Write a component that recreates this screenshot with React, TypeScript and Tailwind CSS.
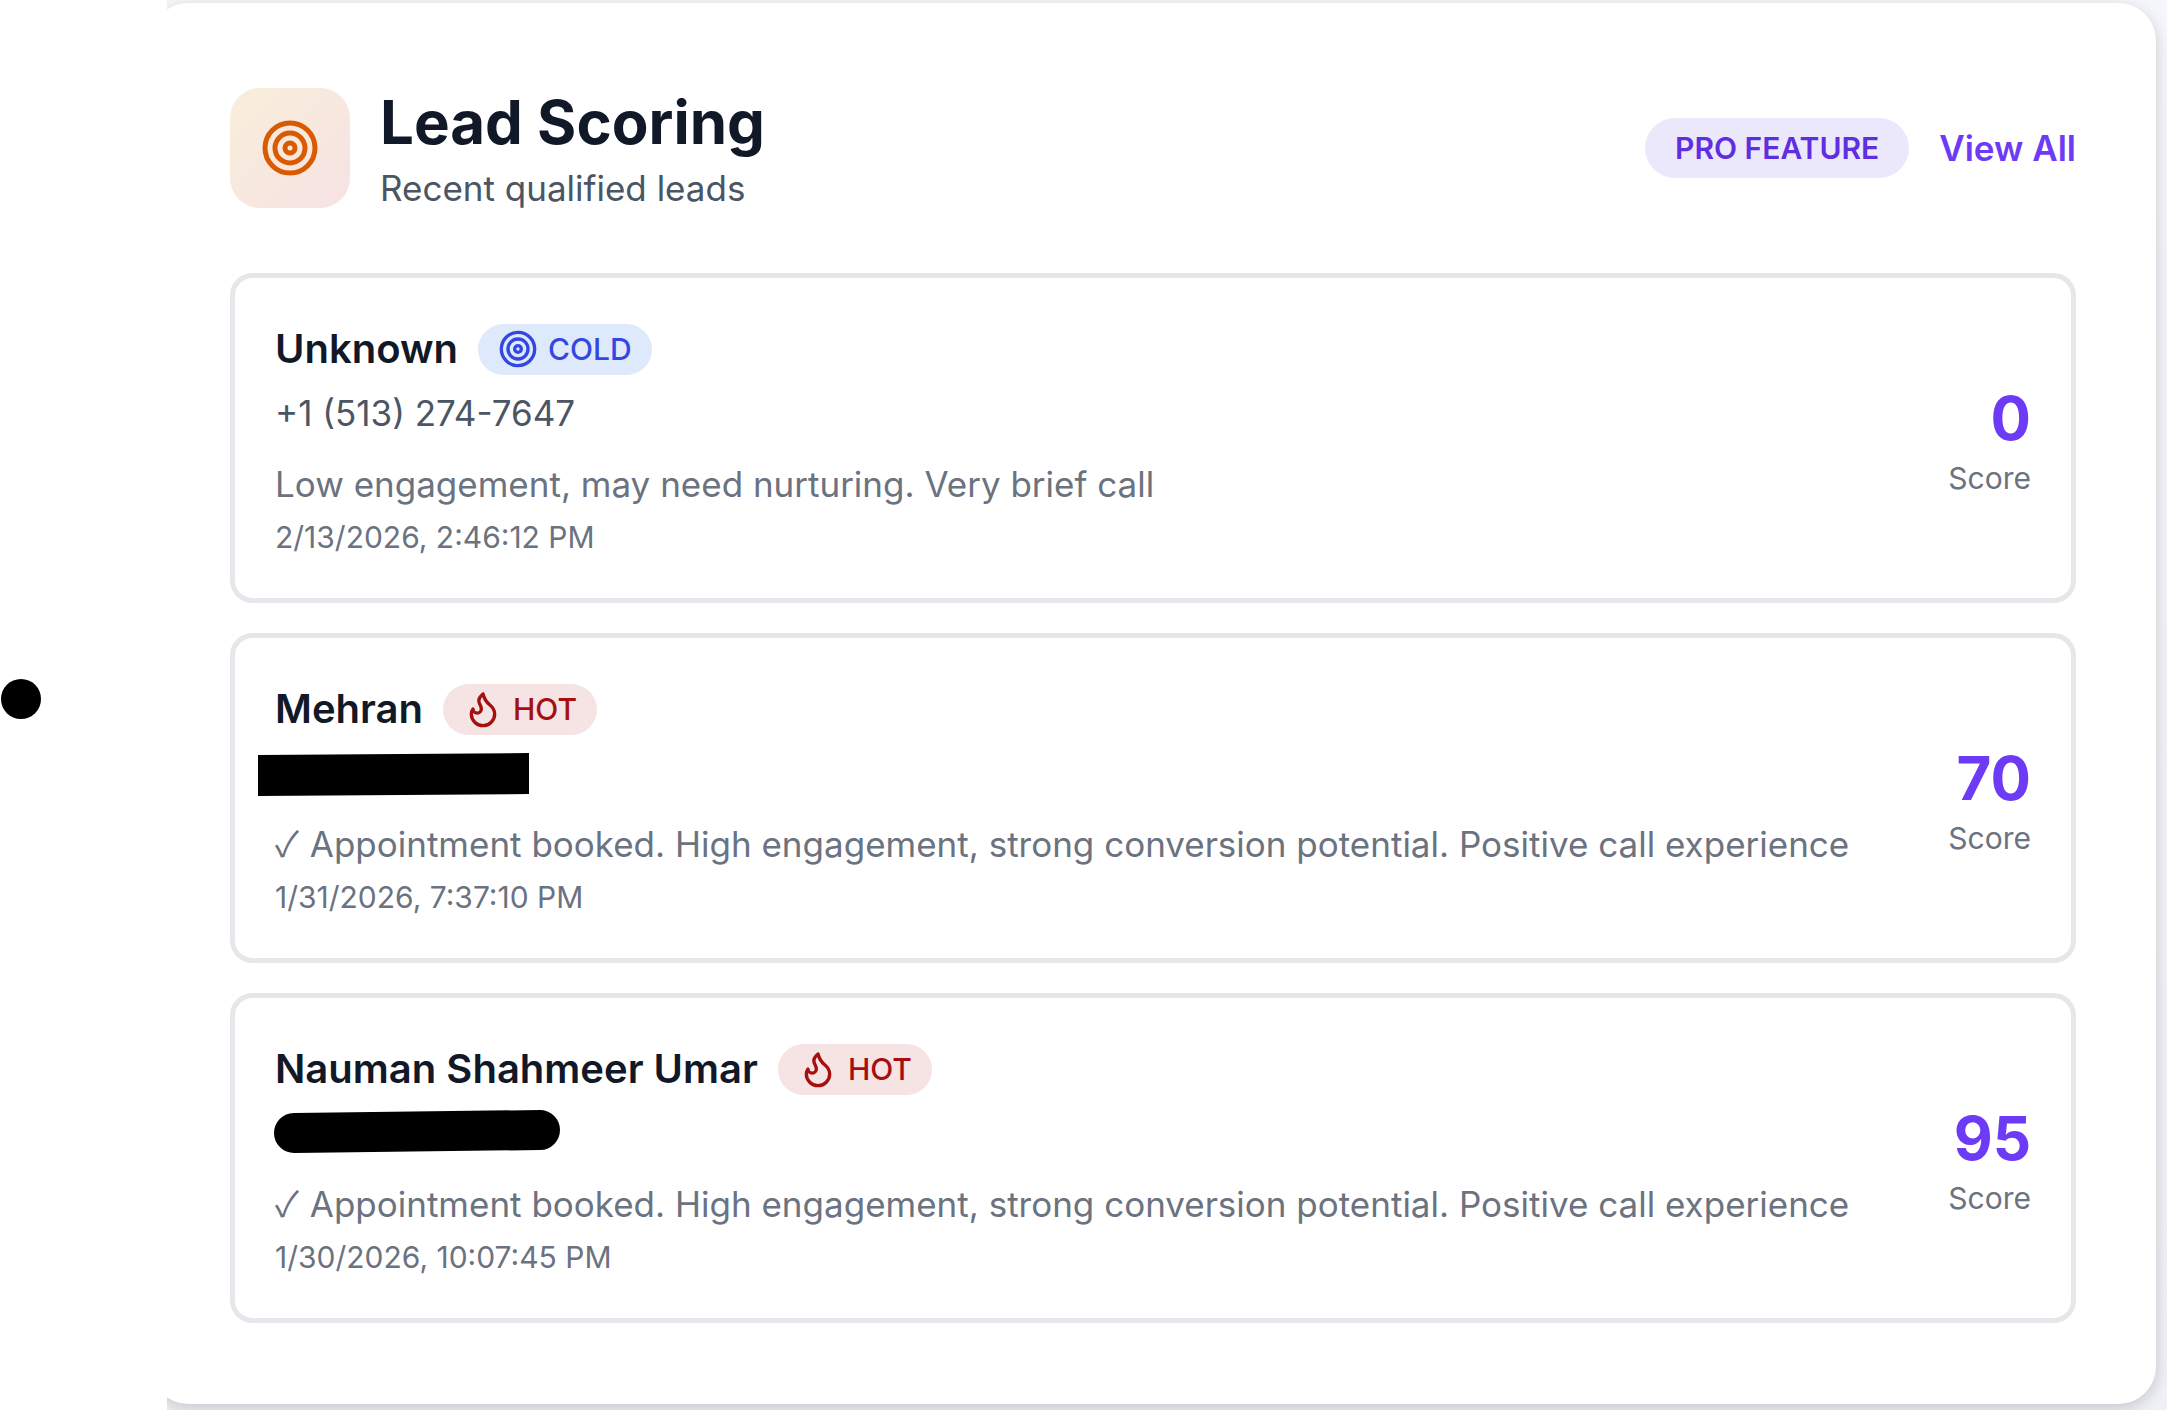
import { Flame, Target } from "lucide-react";

const leads = [
  {
    name: "Unknown",
    temp: "COLD",
    phone: "+1 (513) 274-7647",
    note: "Low engagement, may need nurturing. Very brief call",
    date: "2/13/2026, 2:46:12 PM",
    score: 0,
  },
  {
    name: "Mehran",
    temp: "HOT",
    redact: "box",
    booked: true,
    note: "Appointment booked. High engagement, strong conversion potential. Positive call experience",
    date: "1/31/2026, 7:37:10 PM",
    score: 70,
  },
  {
    name: "Nauman Shahmeer Umar",
    temp: "HOT",
    redact: "pill",
    booked: true,
    note: "Appointment booked. High engagement, strong conversion potential. Positive call experience",
    date: "1/30/2026, 10:07:45 PM",
    score: 95,
  },
];

function TempBadge({ temp }: { temp: string }) {
  if (temp === "COLD") {
    return (
      <span className="flex h-[51px] items-center gap-[10px] rounded-full bg-[#dfe9fc] px-[20px] text-[30px] font-medium text-[#3348e0]">
        <Target className="h-[40px] w-[40px]" strokeWidth={2} />
        COLD
      </span>
    );
  }
  return (
    <span className="flex h-[51px] items-center gap-[10px] rounded-full bg-[#f6e3e4] px-[20px] text-[30px] font-medium text-[#a50f0f]">
      <Flame className="h-[40px] w-[40px]" strokeWidth={2} />
      HOT
    </span>
  );
}

function LeadCard({ lead }: { lead: (typeof leads)[number] }) {
  return (
    <div className="flex h-[330px] items-center justify-between rounded-[22.5px] border-[5px] border-[#e5e7eb] bg-white pl-[40px] pr-[40px]">
      <div className="flex flex-col">
        <div className="flex h-[60px] items-center gap-[20px]">
          <span className="text-[40px] font-semibold text-[#111827]">{lead.name}</span>
          <TempBadge temp={lead.temp} />
        </div>
        <div className="relative mt-[12px] h-[45px] text-[35px] leading-[45px] text-[#4b5563]">
          {lead.phone}
          {lead.redact === "box" && (
            <svg className="absolute left-[-17px] top-[2px]" width="272" height="44" viewBox="0 0 272 44">
              <polygon points="0,2 271,0 271,41 0,43" fill="#000" />
            </svg>
          )}
          {lead.redact === "pill" && (
            <svg className="absolute left-[-1px] top-[-2px]" width="290" height="46" viewBox="0 0 290 46">
              <line x1="20" y1="24" x2="266" y2="21" stroke="#000" strokeWidth="40" strokeLinecap="round" />
            </svg>
          )}
        </div>
        <p className="mt-[26px] text-[35px] leading-[45px] text-[#6b7280]">
          {lead.booked && <span className="mr-[1px] font-['Noto_Sans_CJK_SC',sans-serif] leading-none">✓</span>}
          {lead.booked && " "}
          {lead.note}
        </p>
        <p className="mt-[12px] text-[30px] leading-[37.5px] text-[#6b7280]">{lead.date}</p>
      </div>
      <div className="mt-[6px] flex flex-col items-end">
        <span className="text-[60px] font-bold leading-[67.5px] text-[#6d3bf5]">{lead.score}</span>
        <span className="mt-[8px] text-[30px] leading-[37.5px] text-[#6b7280]">Score</span>
      </div>
    </div>
  );
}

export default function App() {
  return (
    <div className="flex h-[1410px] w-full overflow-hidden bg-white font-['Inter',sans-serif]">
      <div className="w-[167px] shrink-0 pl-[1px] pt-[679px]">
        <div className="h-[40px] w-[40px] rounded-full bg-black" />
      </div>
      <div className="flex-1 overflow-hidden bg-gradient-to-b from-[#f6f7fb] to-[#eff1f6] pb-[6px] pr-[11px] pt-[3px]">
        <div className="ml-[-16px] h-[1401px] rounded-[37.5px] bg-white pb-[81px] pl-[79px] pr-[80px] pt-[85px] shadow-[0_4px_16px_rgba(0,0,0,0.18)]">
          <div className="flex h-[120px] items-center justify-between">
            <div className="flex items-center gap-[30px]">
              <div className="flex h-[120px] w-[120px] items-center justify-center rounded-[30px] bg-gradient-to-br from-[#f9eed9] to-[#f6e2e4]">
                <Target className="h-[60px] w-[60px] text-[#d95a00]" strokeWidth={2} />
              </div>
              <div className="mt-[3px]">
                <h1 className="text-[60px] font-bold leading-[72px] text-[#111827]">Lead Scoring</h1>
                <p className="mt-[5px] text-[35px] leading-[50px] text-[#4b5563]">Recent qualified leads</p>
              </div>
            </div>
            <div className="flex items-center gap-[30px]">
              <span className="flex h-[60px] items-center rounded-full bg-[#ece8fb] px-[30px] text-[30px] font-semibold text-[#5f2ee0]">
                PRO FEATURE
              </span>
              <a className="text-[35px] font-semibold text-[#6d3bf5]">View All</a>
            </div>
          </div>
          <div className="mt-[65px] flex flex-col gap-[30px]">
            {leads.map((lead) => (
              <LeadCard key={lead.name} lead={lead} />
            ))}
          </div>
        </div>
      </div>
    </div>
  );
}
